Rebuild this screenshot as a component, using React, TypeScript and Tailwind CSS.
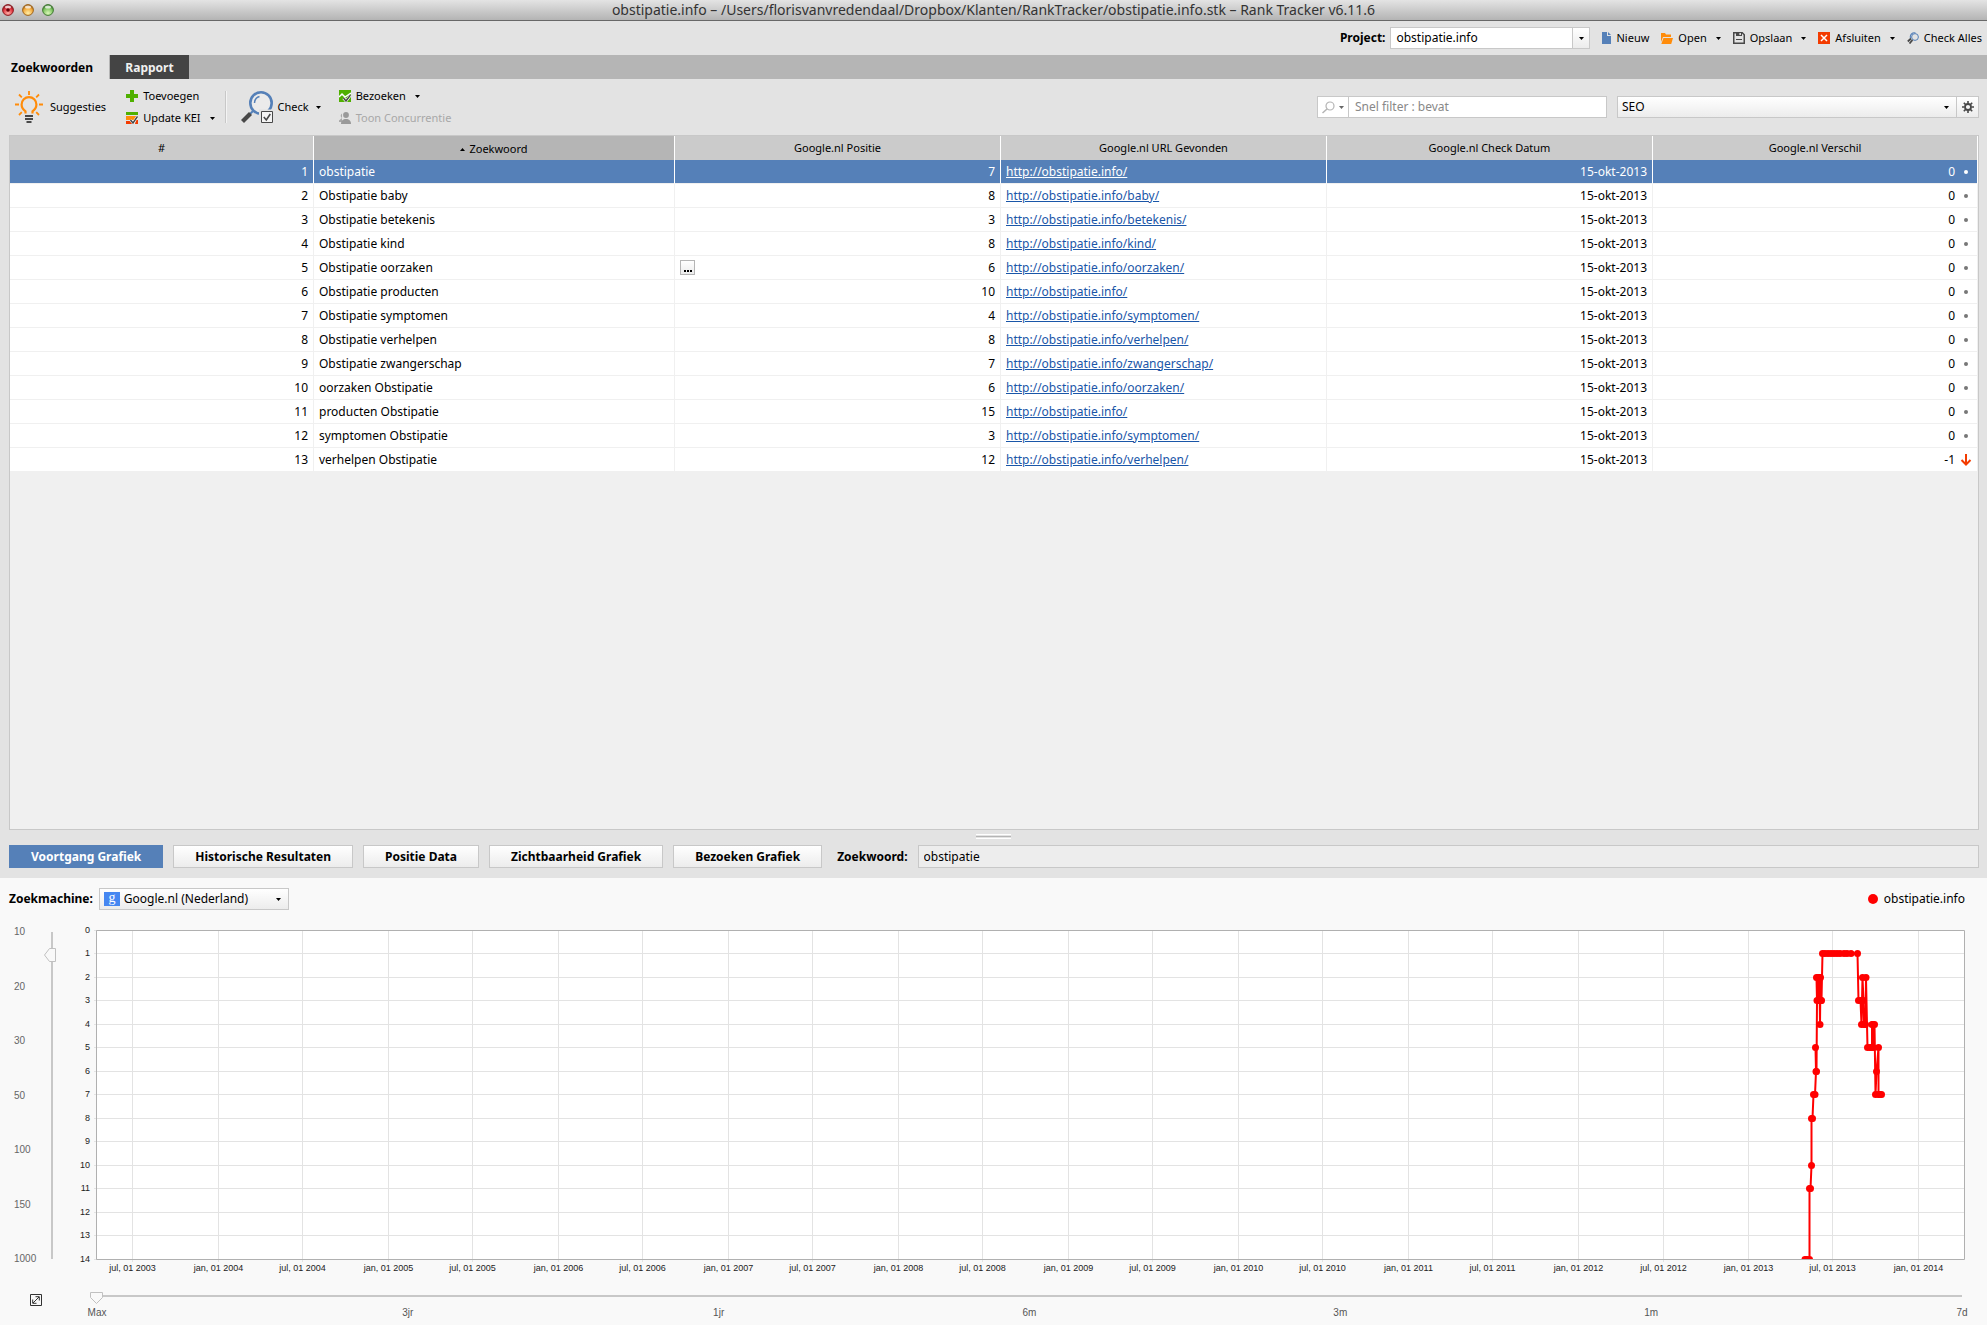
import type { ReactNode } from "react";

interface Keyword {
  id: number;
  name: string;
  position: number;
  url: string;
  diff: number;
}

const BASE = "http://obstipatie.info/";

const KEYWORDS: Keyword[] = [
  { id: 1, name: "obstipatie", position: 7, url: "", diff: 0 },
  { id: 2, name: "Obstipatie baby", position: 8, url: "baby/", diff: 0 },
  { id: 3, name: "Obstipatie betekenis", position: 3, url: "betekenis/", diff: 0 },
  { id: 4, name: "Obstipatie kind", position: 8, url: "kind/", diff: 0 },
  { id: 5, name: "Obstipatie oorzaken", position: 6, url: "oorzaken/", diff: 0 },
  { id: 6, name: "Obstipatie producten", position: 10, url: "", diff: 0 },
  { id: 7, name: "Obstipatie symptomen", position: 4, url: "symptomen/", diff: 0 },
  { id: 8, name: "Obstipatie verhelpen", position: 8, url: "verhelpen/", diff: 0 },
  { id: 9, name: "Obstipatie zwangerschap", position: 7, url: "zwangerschap/", diff: 0 },
  { id: 10, name: "oorzaken Obstipatie", position: 6, url: "oorzaken/", diff: 0 },
  { id: 11, name: "producten Obstipatie", position: 15, url: "", diff: 0 },
  { id: 12, name: "symptomen Obstipatie", position: 3, url: "symptomen/", diff: 0 },
  { id: 13, name: "verhelpen Obstipatie", position: 12, url: "verhelpen/", diff: -1 },
];

const HEADERS = ["#", "Zoekwoord", "Google.nl Positie", "Google.nl URL Gevonden", "Google.nl Check Datum", "Google.nl Verschil"];
const GRAPH_TABS = ["Voortgang Grafiek", "Historische Resultaten", "Positie Data", "Zichtbaarheid Grafiek", "Bezoeken Grafiek"];
const RANGES = ["Max", "3jr", "1jr", "6m", "3m", "1m", "7d"];
const DEPTHS = [10, 20, 30, 50, 100, 150, 1000];

// [x, rank] in chart units
const POINTS: [number, number][] = [
  [1735, 14], [1737, 14], [1739.5, 14], [1739.5, 11], [1740.5, 11], [1741.5, 10], [1741.5, 8], [1742.5, 8],
  [1743.5, 7], [1745, 7], [1746, 6], [1745.5, 5], [1746.5, 6], [1747, 3], [1746.5, 2], [1748, 2], [1748.5, 3],
  [1749.5, 2], [1750, 4], [1750.5, 2], [1751, 3], [1751.5, 3], [1752.5, 1], [1755, 1], [1758, 1], [1761, 1], [1764, 1],
  [1767, 1], [1770, 1], [1774, 1], [1777, 1], [1781, 1], [1787.5, 1], [1788.5, 3], [1790.5, 3], [1791.5, 4],
  [1792.5, 2], [1793.5, 3], [1794, 4], [1795.5, 4], [1796, 2], [1797.5, 5], [1800, 5], [1802, 5], [1802, 4], [1803, 4],
  [1803, 5], [1804.5, 4], [1805.5, 7], [1806.5, 6], [1808.5, 5], [1808.5, 7], [1810, 7], [1811.5, 7],
];

const rankY = (rank: number) => 10.5 + Math.floor(rank * 23.5);

function Caret({ color = "#000" }: { color?: string }) {
  return (
    <svg width="5" height="3" viewBox="0 0 5 3" className="shrink-0">
      <path d="M0 0h5L2.5 3z" fill={color} />
    </svg>
  );
}

function TrafficLight({ name, rim, mid, glow, dot }: { name: string; rim: string; mid: string; glow: string; dot?: boolean }) {
  return (
    <button aria-label={name} className="size-[12px]">
      <svg width="12" height="12" viewBox="0 0 12 12">
        <defs>
          <radialGradient id={name} cx="0.5" cy="0.8" r="0.7">
            <stop offset="0" stopColor={glow} />
            <stop offset="0.7" stopColor={mid} />
            <stop offset="1" stopColor={rim} />
          </radialGradient>
        </defs>
        <circle cx="6" cy="6" r="5.4" fill={`url(#${name})`} stroke={rim} strokeWidth="1" />
        <ellipse cx="6" cy="3" rx="3" ry="1.6" fill="#fff" opacity="0.75" />
        {dot && <circle cx="6" cy="6" r="1.8" fill="#6b0008" />}
      </svg>
    </button>
  );
}

function BulbIcon() {
  return (
    <svg width="28" height="32" viewBox="0 0 28 32">
      <g fill="none" stroke="#ff8c0a" strokeWidth="2.2">
        <path d="M10.5 22.5v-2.2C8 18.5 6.6 16.5 6.6 13.5a7.4 7.4 0 0 1 14.8 0c0 3-1.4 5-3.9 6.8v2.2" />
        <path d="M14 0v4M0 13.5h4M24 13.5h4M4 3.5l2.8 2.8M24 3.5l-2.8 2.8M4 24l2.8-2.8M24 24l-2.8-2.8" strokeWidth="1.8" />
      </g>
      <path d="M10 24h8v2h-8zM10 27h8v2h-8zM11.5 30h5v2h-5z" fill="#484848" />
    </svg>
  );
}

function CheckIcon() {
  return (
    <svg width="32" height="32" viewBox="0 0 32 32">
      <circle cx="20" cy="12" r="10.7" fill="#ebebeb" stroke="#5580b8" strokeWidth="2.6" />
      <path d="M13.5 12a7 7 0 0 1 5-6.5" fill="none" stroke="#5580b8" strokeWidth="1.5" />
      <path d="M9 23l3-3" stroke="#5580b8" strokeWidth="2" />
      <path d="M1.5 30.5l8-8" stroke="#484848" strokeWidth="4.2" />
      <path d="M18 18.5h14V32H18z" fill="#e3e3e3" />
      <path d="M20.5 20.5h11v11h-11z" fill="#f4f4f4" stroke="#484848" />
      <path d="M22.8 26l2.5 3 4-6" fill="none" stroke="#484848" strokeWidth="1.6" />
    </svg>
  );
}

function PlusIcon() {
  return (
    <svg width="12" height="12" viewBox="0 0 12 12">
      <path d="M4 0h4v4h4v4H8v4H4V8H0V4h4z" fill="#4fb000" />
    </svg>
  );
}

function KeiIcon() {
  return (
    <svg width="12" height="12" viewBox="0 0 12 12">
      <path d="M0 0h12v3H0z" fill="#4fb000" />
      <path d="M0 4h10v4H0z" fill="#ff8c0a" />
      <path d="M0 9h5l3 3H0zM10 8h2v4H9z" fill="#f33b00" />
      <path d="M4.5 8l2.5 3 4.5-6.5" fill="none" stroke="#fff" strokeWidth="2.6" />
      <path d="M4.5 8l2.5 3 4.5-6.5" fill="none" stroke="#484848" strokeWidth="1.5" />
    </svg>
  );
}

function VisitsIcon() {
  return (
    <svg width="12" height="12" viewBox="0 0 12 12">
      <path d="M0 0h12v12H0z" fill="#4fb000" />
      <path d="M0 7l3-3 3 3 3-2 3-2" fill="none" stroke="#fff" strokeWidth="1.5" />
      <path d="M4.5 8l2.5 3 4.5-6" fill="none" stroke="#fff" strokeWidth="2.8" />
      <path d="M4.5 8l2.5 3 4.5-6" fill="none" stroke="#484848" strokeWidth="1.5" />
    </svg>
  );
}

function PeopleIcon() {
  return (
    <svg width="12" height="12" viewBox="0 0 12 12" fill="#999">
      <path d="M3 1.5A2.6 2.6 0 0 0 3 6L0 8.5V10h3z" opacity="0.8" />
      <circle cx="7" cy="3" r="2.9" />
      <path d="M2 12c0-3.5 2-5 5-5s5 1.5 5 5z" />
    </svg>
  );
}

function FileIcon() {
  return (
    <svg width="9" height="12" viewBox="0 0 9 12" fill="#5580b8">
      <path d="M0 0h5v4h4v8H0z" />
      <path d="M6 0l3 3H6z" />
    </svg>
  );
}

function FolderIcon() {
  return (
    <svg width="12" height="11" viewBox="0 0 12 11" fill="#ff8c0a">
      <path d="M0 0h4l1 1.5h5V4H2L0 9z" />
      <path d="M2.5 5H12l-1.8 6H0.3z" />
    </svg>
  );
}

function FloppyIcon() {
  return (
    <svg width="12" height="12" viewBox="0 0 12 12" fill="none" stroke="#484848">
      <path d="M0.75 0.75h8.5l2 2v8.5H0.75z" strokeWidth="1.5" />
      <path d="M3 0h6v4H3z" fill="#484848" stroke="none" />
      <path d="M6.5 1h1.3v2H6.5z" fill="#fff" stroke="none" />
      <path d="M3 7.5h6" />
    </svg>
  );
}

function CloseIcon() {
  return (
    <svg width="12" height="12" viewBox="0 0 12 12">
      <path d="M0 0h12v12H0z" fill="#f33b00" />
      <path d="M3 3l6 6M9 3l-6 6" stroke="#fff" strokeWidth="1.5" />
    </svg>
  );
}

function CheckAllIcon() {
  return (
    <svg width="12" height="12" viewBox="0 0 12 12" fill="none" stroke="#5580b8">
      <path d="M3.5 6a4 4 0 0 1 5-5" strokeWidth="1.1" />
      <circle cx="8" cy="5" r="3.4" />
      <path d="M0.8 9.5L4 6.5M2.5 11.5L5.5 8" stroke="#484848" strokeWidth="1.8" />
    </svg>
  );
}

function GearIcon() {
  return (
    <svg width="12" height="12" viewBox="0 0 12 12" fill="none" stroke="#484848">
      <circle cx="6" cy="6" r="3" strokeWidth="1.8" />
      <path d="M6 0v2.5M6 9.5V12M0 6h2.5M9.5 6H12M1.8 1.8l1.7 1.7M8.5 8.5l1.7 1.7M10.2 1.8L8.5 3.5M3.5 8.5l-1.7 1.7" strokeWidth="1.6" />
    </svg>
  );
}

function ToolButton({ icon, label, menu, disabled }: { icon: ReactNode; label: string; menu?: boolean; disabled?: boolean }) {
  return (
    <button disabled={disabled} className="flex h-4 items-center gap-[5px] whitespace-nowrap disabled:text-[#a8a8a8]">
      {icon}
      {label}
      {menu && (
        <span className="ml-1">
          <Caret />
        </span>
      )}
    </button>
  );
}

function TitleBar() {
  return (
    <header className="relative flex h-[21px] items-center justify-center border-b border-[#686868] bg-linear-to-b from-[#e4e4e4] to-[#b4b4b4]">
      <div className="absolute left-[2px] flex gap-2">
        <TrafficLight name="close" rim="#8c1a20" mid="#e0333c" glow="#ffb0a8" dot />
        <TrafficLight name="minimize" rim="#a0661c" mid="#f2a83a" glow="#fff0a8" />
        <TrafficLight name="zoom" rim="#417a33" mid="#7cc25f" glow="#dcf8b8" />
      </div>
      <h1 className="truncate px-16 text-[14px] leading-5 text-[#333]">
        obstipatie.info – /Users/florisvanvredendaal/Dropbox/Klanten/RankTracker/obstipatie.info.stk – Rank Tracker v6.11.6
      </h1>
    </header>
  );
}

function ProjectBar() {
  return (
    <div className="flex h-[34px] items-center justify-end gap-3 pr-[5px] text-[11px]">
      <div className="flex items-center gap-[5px]">
        <label htmlFor="project" className="text-[12px] font-bold">
          Project:
        </label>
        <div className="relative flex h-[22px] w-[200px] items-center border border-[#c8c8c8] bg-white">
          <select id="project" className="h-full w-full appearance-none pl-[5px] text-[12px] outline-none">
            <option>obstipatie.info</option>
          </select>
          <span className="pointer-events-none absolute inset-y-0 right-0 flex w-[17px] items-center justify-center border-l border-[#c8c8c8] bg-linear-to-b from-white to-[#ececec]">
            <Caret />
          </span>
        </div>
      </div>
      <ToolButton icon={<FileIcon />} label="Nieuw" />
      <ToolButton icon={<FolderIcon />} label="Open" menu />
      <ToolButton icon={<FloppyIcon />} label="Opslaan" menu />
      <ToolButton icon={<CloseIcon />} label="Afsluiten" menu />
      <ToolButton icon={<CheckAllIcon />} label="Check Alles" />
    </div>
  );
}

function Toolbar() {
  return (
    <div className="flex h-14 items-center pr-2 pl-[15px] text-[11px]">
      <button className="flex items-center gap-[7px]">
        <BulbIcon />
        Suggesties
      </button>
      <div className="ml-[20px] flex flex-col gap-[6px]">
        <ToolButton icon={<PlusIcon />} label="Toevoegen" />
        <ToolButton icon={<KeiIcon />} label="Update KEI" menu />
      </div>
      <div className="ml-[10px] h-8 w-[2px] border-l border-[#c8c8c8] bg-[#f4f4f4]" />
      <button className="ml-[14px] flex items-center gap-[5px]">
        <CheckIcon />
        Check
        <span className="ml-[2px]">
          <Caret />
        </span>
      </button>
      <div className="ml-[18px] flex flex-col gap-[6px]">
        <ToolButton icon={<VisitsIcon />} label="Bezoeken" menu />
        <ToolButton icon={<PeopleIcon />} label="Toon Concurrentie" disabled />
      </div>
      <div className="ml-auto flex h-[22px] w-[290px] items-stretch border border-[#c8c8c8] bg-white">
        <button aria-label="Filteropties" className="flex w-[31px] items-center justify-center gap-1 border-r border-[#c8c8c8]">
          <svg width="13" height="13" viewBox="0 0 13 13" fill="none" stroke="#b4b4b4">
            <circle cx="8" cy="5" r="4" strokeWidth="1.2" />
            <path d="M5 8l-4.5 4" strokeWidth="1.5" />
          </svg>
          <Caret color="#666" />
        </button>
        <input aria-label="Snel filter" placeholder="Snel filter : bevat" className="min-w-0 flex-1 px-[6px] text-[12px] outline-none placeholder:text-[#888]" />
      </div>
      <div className="ml-[10px] flex h-[22px] w-[362px] border border-[#c8c8c8] bg-linear-to-b from-white to-[#ececec]">
        <div className="relative flex-1 border-r border-[#c8c8c8]">
          <select aria-label="Werkruimte" className="h-full w-full appearance-none pl-1 text-[12px] outline-none">
            <option>SEO</option>
          </select>
          <span className="pointer-events-none absolute inset-y-0 right-[7px] flex items-center">
            <Caret />
          </span>
        </div>
        <button aria-label="Instellingen" className="flex w-[21px] items-center justify-center">
          <GearIcon />
        </button>
      </div>
    </div>
  );
}

function KeywordTable() {
  return (
    <div className="mr-2 ml-[9px] flex-1 border border-[#c8c8c8] bg-[#f0f0f0]">
      <table className="w-full table-fixed border-separate border-spacing-0 text-[12px] leading-4">
        <colgroup>
          <col className="w-[304px]" />
          <col className="w-[361px]" />
          <col className="w-[326px]" />
          <col className="w-[326px]" />
          <col className="w-[326px]" />
          <col className="w-[325px]" />
        </colgroup>
        <thead>
          <tr>
            {HEADERS.map((h, i) => (
              <th
                key={h}
                scope="col"
                className={`h-6 border-r border-white p-0 text-center text-[11px] font-normal ${i === 1 ? "bg-[#b5b5b5]" : "bg-[#cbcbcb]"}`}
              >
                {i === 1 ? (
                  <span className="inline-flex items-center gap-1">
                    <svg width="5" height="3" viewBox="0 0 5 3">
                      <path d="M0 3h5L2.5 0z" />
                    </svg>
                    {h}
                  </span>
                ) : (
                  h
                )}
              </th>
            ))}
          </tr>
        </thead>
        <tbody>
          {KEYWORDS.map((k) => {
            const selected = k.id === 1;
            const cell = `h-6 border-r border-b px-[5px] py-0 ${
              selected ? "border-r-white border-b-[#f0f0f0]" : "border-[#f0f0f0]"
            }`;
            return (
              <tr key={k.id} className={selected ? "bg-[#5580b8] text-white" : "bg-white"}>
                <td className={`${cell} text-right`}>{k.id}</td>
                <td className={cell}>{k.name}</td>
                <td className={cell}>
                  <div className="flex items-center justify-end">
                    {k.id === 5 && (
                      <button
                        aria-label="Details"
                        className="mr-auto flex h-[15px] w-[15px] items-end justify-center border border-[#b5b5b5] bg-linear-to-b from-white to-[#ececec] pb-[2px]"
                      >
                        <svg width="8" height="2" viewBox="0 0 8 2">
                          <path d="M0 0h2v2H0zM3 0h2v2H3zM6 0h2v2H6z" />
                        </svg>
                      </button>
                    )}
                    {k.position}
                  </div>
                </td>
                <td className={cell}>
                  <a href={BASE + k.url} className={`underline ${selected ? "text-white" : "text-[#1a56a8]"}`}>
                    {BASE + k.url}
                  </a>
                </td>
                <td className={`${cell} text-right`}>15-okt-2013</td>
                <td className={cell}>
                  <div className="flex items-center justify-end gap-[5px]">
                    {k.diff}
                    <svg width="12" height="12" viewBox="0 0 12 12">
                      {k.diff < 0 ? (
                        <path d="M6 0v11M1.5 6L6 10.5 10.5 6" fill="none" stroke="#f33b00" strokeWidth="2" />
                      ) : (
                        <circle cx="6" cy="6" r="2" fill={selected ? "#fff" : "#777"} />
                      )}
                    </svg>
                  </div>
                </td>
              </tr>
            );
          })}
        </tbody>
      </table>
    </div>
  );
}

function GraphTabs() {
  return (
    <div className="flex h-[33px] items-start pr-2 pl-[9px] text-[12px]">
      <div className="flex gap-[10px]">
        {GRAPH_TABS.map((t, i) => (
          <button
            key={t}
            className={`h-[23px] border px-[21px] font-bold whitespace-nowrap ${
              i === 0 ? "border-[#5580b8] bg-[#5580b8] text-white" : "border-[#c8c8c8] bg-linear-to-b from-white to-[#ececec]"
            }`}
          >
            {t}
          </button>
        ))}
      </div>
      <label htmlFor="keyword" className="ml-[15px] leading-[23px] font-bold">
        Zoekwoord:
      </label>
      <input id="keyword" readOnly value="obstipatie" className="ml-[10px] h-[23px] min-w-0 flex-1 border border-[#c8c8c8] bg-[#ededed] px-[5px] outline-none" />
    </div>
  );
}

function RankChart() {
  // half-year gridlines, 0.4655 units of x per day
  const start = Date.UTC(2003, 6, 1);
  const ticks = Array.from({ length: 22 }, (_, i) => {
    const year = 2003 + Math.floor((i + 1) / 2);
    const month = i % 2 === 0 ? 6 : 0;
    const days = (Date.UTC(year, month, 1) - start) / 86400000;
    return { x: Math.round(132 + days * 0.4655) + 0.5, label: `${month ? "jul" : "jan"}, 01 ${year}` };
  });
  return (
    <svg viewBox="70 0 1917 355" className="w-full flex-1 font-['Liberation_Sans',Arial,sans-serif]" role="img" aria-label="Voortgang Grafiek">
      <path d="M96.5 10.5h1868v329h-1868z" fill="#fff" />
      <g stroke="#e3e3e3">
        {Array.from({ length: 15 }, (_, i) => (
          <path key={i} d={`M94 ${rankY(i)}H1964`} />
        ))}
        {ticks.map((t) => (
          <path key={t.x} d={`M${t.x} 10V342`} />
        ))}
      </g>
      <path d="M96.5 10.5h1868v329h-1868z" fill="none" stroke="#b0b0b0" />
      <g fontSize="9" fill="#222">
        {Array.from({ length: 15 }, (_, i) => (
          <text key={i} x="90" y={Math.floor(rankY(i)) + 3} textAnchor="end">
            {i}
          </text>
        ))}
        {ticks.map((t) => (
          <text key={t.x} x={t.x} y="351" textAnchor="middle">
            {t.label}
          </text>
        ))}
      </g>
      <clipPath id="plot">
        <path d="M96 7h1869v332H96z" />
      </clipPath>
      <g clipPath="url(#plot)" fill="red">
        <polyline points={POINTS.map(([x, r]) => `${x + 70},${rankY(r)}`).join(" ")} fill="none" stroke="red" strokeWidth="2" />
        {POINTS.map(([x, r], i) => (
          <circle key={i} cx={x + 70} cy={rankY(r)} r="3.5" />
        ))}
      </g>
    </svg>
  );
}

function GraphPanel() {
  return (
    <section className="bg-[#f9f9f9]">
      <div className="flex items-center pt-[10px] pr-[22px] pl-[9px] text-[12px]">
        <label htmlFor="engine" className="font-bold">
          Zoekmachine:
        </label>
        <div className="relative ml-[6px] flex h-[22px] w-[190px] items-center border border-[#c8c8c8] bg-linear-to-b from-white to-[#ececec]">
          <svg width="16" height="14" viewBox="0 0 16 14" className="absolute left-1 overflow-visible">
            <path d="M0 0h16v14H0z" fill="#4687f1" />
            <text x="8" y="10" textAnchor="middle" fontSize="14" fill="#fff" className="font-['Liberation_Serif',serif]">
              g
            </text>
          </svg>
          <select id="engine" className="h-full w-full appearance-none pl-6 outline-none">
            <option>Google.nl (Nederland)</option>
          </select>
          <span className="pointer-events-none absolute right-[7px] flex">
            <Caret />
          </span>
        </div>
        <span className="ml-auto flex items-center gap-[6px]">
          <span className="size-[10px] rounded-full bg-[red]" />
          obstipatie.info
        </span>
      </div>

      <div className="flex font-['Liberation_Sans',Arial,sans-serif]">
        <div className="flex w-[70px] shrink-0 pt-4 pb-[10px] pl-[14px]">
          <div className="flex w-[30px] flex-col justify-between text-[10px] leading-3 text-[#666]">
            {DEPTHS.map((d) => (
              <span key={d}>{d}</span>
            ))}
          </div>
          <div className="relative flex w-3 justify-end py-[6px] pr-[3px]">
            <div className="w-[2px] bg-[#c8c8c8]" />
            <svg width="12" height="14" viewBox="0 0 12 14" className="absolute top-[22px] left-0">
              <path d="M0.5 7l5-6.5h6v13h-6z" fill="#f9f9f9" stroke="#c0c0c0" />
            </svg>
            <input type="range" aria-label="Diepte" defaultValue={5} className="absolute inset-0 h-full w-full cursor-pointer opacity-0" />
          </div>
        </div>
        <div className="flex min-w-0 flex-1 pt-[10px]">
          <RankChart />
        </div>
      </div>

      <div className="flex h-[50px] items-start pt-[17px] pr-[15px] pl-[30px] font-['Liberation_Sans',Arial,sans-serif]">
        <button aria-label="Vergroten" className="mt-[2px]">
          <svg width="12" height="12" viewBox="0 0 12 12" fill="none" stroke="#333">
            <path d="M0.5 0.5h11v11H0.5z" />
            <path d="M3 9l6-6M5.5 2.7h3.8v3.8M2.7 5.5v3.8h3.8" />
          </svg>
        </button>
        <div className="ml-[45px] flex-1">
          <div className="relative mr-[10px] ml-[9px] h-3">
            <div className="absolute inset-x-0 top-[3px] h-[2px] bg-[#c8c8c8]" />
            <svg width="13" height="12" viewBox="0 0 13 12" className="absolute top-0 left-[-6px]">
              <path d="M0.5 0.5h12v5l-6 6-6-6z" fill="#f9f9f9" stroke="#c0c0c0" />
            </svg>
            <input type="range" aria-label="Periode" defaultValue={0} className="absolute inset-0 h-full w-full cursor-pointer opacity-0" />
          </div>
          <div className="mt-[3px] flex justify-between text-[10px] leading-3 text-[#555]">
            {RANGES.map((r) => (
              <span key={r} className="w-5 text-center">
                {r}
              </span>
            ))}
          </div>
        </div>
      </div>
    </section>
  );
}

export default function App() {
  return (
    <div className="flex min-h-screen flex-col bg-[#e3e3e3] font-['Noto_Sans','Lucida_Grande',sans-serif] text-black">
      <TitleBar />
      <ProjectBar />
      <nav className="flex h-6 items-stretch bg-[#b5b5b5] text-[12px] font-bold">
        <button className="mr-px w-[109px] bg-[#e3e3e3] pt-px pr-[5px]">Zoekwoorden</button>
        <button className="w-[79px] bg-[#444] pt-px text-[#f0f0f0]">Rapport</button>
      </nav>
      <Toolbar />
      <KeywordTable />
      <div className="flex h-[15px] flex-col items-center gap-px pt-1">
        <div className="h-px w-[35px] bg-white" />
        <div className="h-px w-[35px] bg-[#b5b5b5]" />
        <div className="h-px w-[35px] bg-white" />
      </div>
      <GraphTabs />
      <GraphPanel />
    </div>
  );
}
